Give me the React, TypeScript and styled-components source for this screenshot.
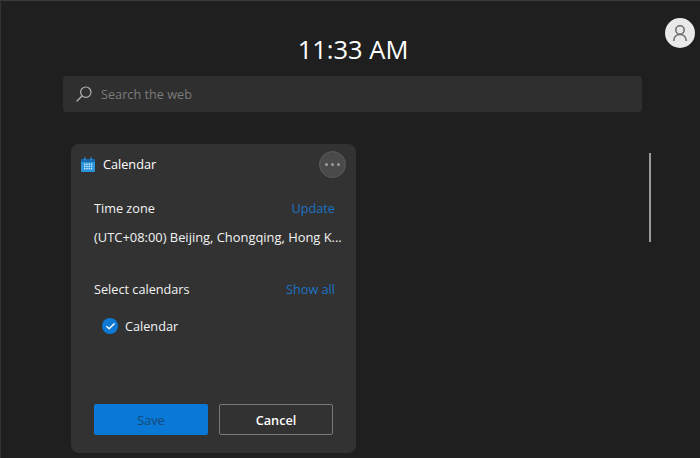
import React from 'react';
import styled, { createGlobalStyle } from 'styled-components';
import { Check } from 'lucide-react';

const GlobalStyle = createGlobalStyle`
  html, body {
    margin: 0;
    padding: 0;
    width: 700px;
    height: 458px;
    overflow: hidden;
    background: #1f1f1f;
    font-family: "Open Sans", "Noto Sans", sans-serif;
  }
`;

const Page = styled.div`
  position: relative;
  box-sizing: border-box;
  width: 700px;
  height: 458px;
  padding: 31px 58px 0 63px;
  background: #1f1f1f;
  border-top: 1px solid #3a3a3a;
  border-left: 1px solid #333;
  overflow: hidden;
`;

const Clock = styled.div`
  height: 35px;
  margin-bottom: 9px;
  text-align: center;
  font-size: 25.5px;
  line-height: 35px;
  color: #fff;
`;

const SearchBar = styled.div`
  display: flex;
  align-items: center;
  gap: 9px;
  height: 36px;
  margin-left: -1px;
  padding-left: 13px;
  background: #2f2f2f;
  border-radius: 4px;
  color: #7b7b7b;
  font-size: 12.7px;
`;

const Content = styled.div`
  display: flex;
  justify-content: space-between;
  align-items: flex-start;
  margin-top: 32px;
  padding-left: 7px;
`;

const Card = styled.section`
  box-sizing: border-box;
  display: flex;
  flex-direction: column;
  width: 285px;
  height: 309px;
  padding: 7px 10px 18px 10px;
  background: #323232;
  border-radius: 8px;
  color: #f2f2f2;
`;

const CardHead = styled.header`
  display: flex;
  align-items: center;
  gap: 8px;
  height: 26px;
  font-size: 12.7px;
  color: #fff;
`;

const CardTitle = styled.span`
  flex: 1;
`;

const MoreButton = styled.button`
  display: flex;
  align-items: center;
  justify-content: center;
  gap: 3px;
  width: 27px;
  height: 27px;
  padding: 0;
  background: #4a4a4a;
  border: 1px solid #5c5c5c;
  border-radius: 50%;
`;

const Dot = styled.i`
  width: 3px;
  height: 3px;
  border-radius: 50%;
  background: #9c9c9c;
`;

const Body = styled.div`
  flex: 1;
  display: flex;
  flex-direction: column;
  padding: 22px 11px 0 13px;
  font-size: 12.7px;
`;

const Row = styled.div<{ $top?: number }>`
  display: flex;
  justify-content: space-between;
  align-items: center;
  height: 18px;
  margin-top: ${p => p.$top ?? 0}px;
`;

const LinkText = styled.a`
  color: #1a73c4;
`;

const Zone = styled.div`
  height: 18px;
  margin-top: 11px;
  font-size: 12.9px;
  line-height: 18px;
  white-space: nowrap;
  width: 252px;
`;

const CalendarRow = styled.div`
  display: flex;
  align-items: center;
  gap: 7px;
  height: 20px;
  margin: 18px 0 0 8px;
`;

const CheckDot = styled.span`
  display: flex;
  align-items: center;
  justify-content: center;
  width: 16px;
  height: 16px;
  border-radius: 50%;
  background: #0f78d4;
  color: #fff;
`;

const Actions = styled.div`
  display: flex;
  gap: 11px;
  padding-left: 13px;
`;

const ActionButton = styled.button<{ $primary?: boolean }>`
  box-sizing: border-box;
  width: 114px;
  height: 31px;
  padding: 0;
  font-family: inherit;
  font-size: 12.7px;
  font-weight: ${p => (p.$primary ? 500 : 600)};
  border-radius: 2px;
  background: ${p => (p.$primary ? '#0a78d7' : 'transparent')};
  border: ${p => (p.$primary ? 'none' : '1px solid #7a7a7a')};
  color: ${p => (p.$primary ? '#174a74' : '#fff')};
`;

const ScrollThumb = styled.div`
  width: 2px;
  height: 89px;
  margin-top: 9px;
  margin-right: -9px;
  background: #9a9a9a;
`;

const Avatar = styled.div`
  position: absolute;
  top: 17px;
  right: 5px;
  display: flex;
  align-items: center;
  justify-content: center;
  width: 30px;
  height: 30px;
  border-radius: 50%;
  background: #e9e9e9;
  color: #6a6a6a;
`;

const SearchIcon = () => (
  <svg width="16" height="16" viewBox="0 0 16 16" fill="none" stroke="#b5b5b5" strokeWidth="1.2">
    <circle cx="9.8" cy="6.2" r="5.2" />
    <path d="M6 10L1 15" strokeLinecap="round" />
  </svg>
);

const CalendarIcon = () => (
  <svg width="14" height="15" viewBox="0 0 14 15">
    <rect x="0" y="2" width="14" height="13" rx="1" fill="#2b95dc" />
    <rect x="0" y="2" width="14" height="3" fill="#1668ae" />
    <rect x="3" y="0.5" width="1.4" height="3" fill="#2b95dc" />
    <rect x="9.6" y="0.5" width="1.4" height="3" fill="#2b95dc" />
    {[6.5, 8.7, 10.9].map(y =>
      [3, 5.3, 7.6, 9.9].map(x => (
        <rect key={`${x}-${y}`} x={x} y={y} width="1.4" height="1.4" fill="#cfeafa" />
      ))
    )}
  </svg>
);

const PersonIcon = () => (
  <svg width="18" height="18" viewBox="0 0 18 18" fill="none" stroke="currentColor" strokeWidth="1.5">
    <circle cx="9" cy="6" r="4.2" />
    <path d="M2.8 17c0-3.8 2.4-6.6 6.2-6.6s6.2 2.8 6.2 6.6" />
  </svg>
);

export default function App() {
  return (
    <>
      <GlobalStyle />
      <Page>
        <Clock>11:33 AM</Clock>
        <SearchBar>
          <SearchIcon />
          Search the web
        </SearchBar>
        <Content>
          <Card>
            <CardHead>
              <CalendarIcon />
              <CardTitle>Calendar</CardTitle>
              <MoreButton aria-label="More">
                <Dot />
                <Dot />
                <Dot />
              </MoreButton>
            </CardHead>
            <Body>
              <Row>
                <span>Time zone</span>
                <LinkText>Update</LinkText>
              </Row>
              <Zone>(UTC+08:00) Beijing, Chongqing, Hong K...</Zone>
              <Row $top={34}>
                <span>Select calendars</span>
                <LinkText>Show all</LinkText>
              </Row>
              <CalendarRow>
                <CheckDot>
                  <Check size={11} strokeWidth={3} />
                </CheckDot>
                Calendar
              </CalendarRow>
            </Body>
            <Actions>
              <ActionButton $primary>Save</ActionButton>
              <ActionButton>Cancel</ActionButton>
            </Actions>
          </Card>
          <ScrollThumb />
        </Content>
        <Avatar>
          <PersonIcon />
        </Avatar>
      </Page>
    </>
  );
}
